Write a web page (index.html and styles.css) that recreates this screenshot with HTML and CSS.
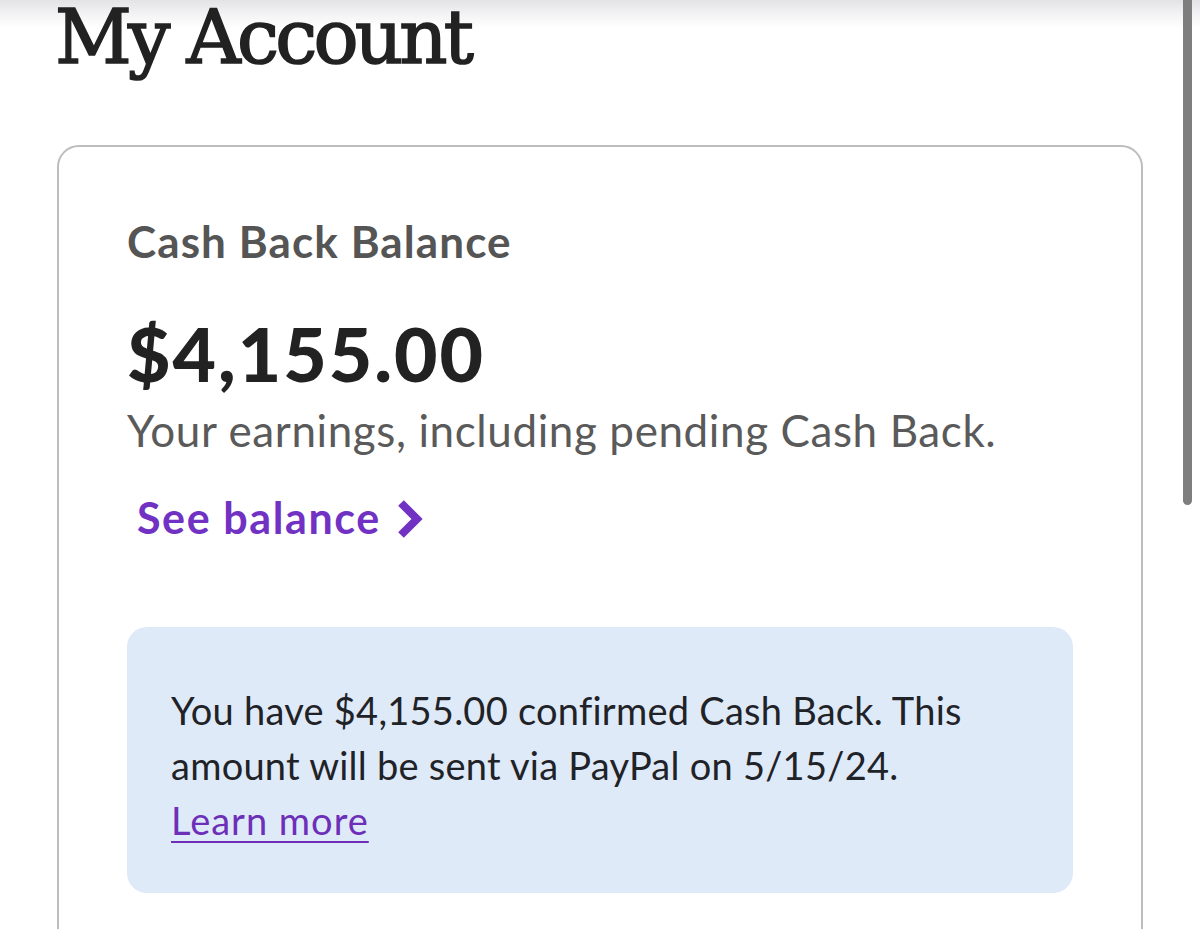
FILE: index.html
```html
<!DOCTYPE html>
<html lang="en">
<head>
<meta charset="utf-8">
<title>My Account</title>
<link rel="stylesheet" href="styles.css">
</head>
<body>
<div class="scroll-indicator"></div>
<main class="page">
  <h1 class="page-title">My Account</h1>
  <section class="card">
    <h2 class="card-title">Cash Back Balance</h2>
    <div class="amount">$4,155.00</div>
    <p class="amount-note">Your earnings, including pending Cash Back.</p>
    <a class="see-balance" href="#">See balance
      <svg class="chev" width="26" height="38" viewBox="0 0 26 38" aria-hidden="true"><path d="M4 3 L20 19 L4 35" fill="none" stroke="currentColor" stroke-width="8" stroke-linejoin="miter"/></svg>
    </a>
    <div class="notice">
      <p class="notice-text">You have $4,155.00 confirmed Cash Back. This amount will be sent via PayPal on 5/15/24.</p>
      <a class="learn-more" href="#">Learn more</a>
    </div>
  </section>
</main>
</body>
</html>
```

FILE: styles.css
```css
html, body {
  margin: 0;
  padding: 0;
  height: 100%;
  overflow: hidden;
}

body {
  background: linear-gradient(to bottom, #e3e3e6 0px, #f3f3f5 14px, #ffffff 28px) no-repeat;
  background-color: #ffffff;
  font-family: "Lato", "Liberation Sans", sans-serif;
  color: #222222;
}

.scroll-indicator {
  position: fixed;
  top: 0;
  left: 1183px;
  width: 9px;
  height: 505px;
  background: #7e7e7e;
  border-radius: 0 0 5px 5px;
}

.page {
  padding: 0 57px;
}

.page-title {
  margin: 0 0 0 -2px;
  font-family: "DejaVu Serif", "Liberation Serif", serif;
  font-weight: 400;
  font-size: 75px;
  line-height: 75px;
  letter-spacing: -3.8px;
  color: #222222;
  -webkit-text-stroke: 1.6px #222222;
}

.card {
  margin-top: 70px;
  border: 2px solid #bdbdbd;
  border-radius: 22px;
  padding: 68px 68px 120px;
  display: flex;
  flex-direction: column;
  align-items: flex-start;
}

.card-title {
  margin: 0;
  font-size: 44px;
  line-height: 52px;
  font-weight: 700;
  letter-spacing: 1.1px;
  color: #555555;
}

.amount {
  margin-top: 46px;
  font-size: 75px;
  line-height: 80px;
  font-weight: 900;
  color: #222222;
  letter-spacing: 2px;
}

.amount-note {
  margin: 11px 0 0;
  font-size: 44px;
  line-height: 52px;
  font-weight: 400;
  letter-spacing: 0.6px;
  color: #5a5a5a;
}

.see-balance {
  margin: 36px 0 0 10px;
  display: flex;
  align-items: center;
  gap: 16px;
  font-size: 43px;
  line-height: 52px;
  font-weight: 700;
  letter-spacing: 1.6px;
  color: #7132c4;
  text-decoration: none;
}

.chev {
  display: block;
  margin-top: 2px;
}

.notice {
  align-self: stretch;
  margin-top: 83px;
  background: #dfeaf8;
  border-radius: 20px;
  padding: 56px 45px 45px 44px;
}

.notice-text {
  margin: 0;
  max-width: 830px;
  font-size: 38px;
  line-height: 55px;
  letter-spacing: 0.25px;
  color: #1f2328;
}

.learn-more {
  display: inline-block;
  font-size: 38px;
  line-height: 55px;
  letter-spacing: 1px;
  color: #6d2fb8;
  text-decoration: underline;
  text-decoration-thickness: 2px;
  text-underline-offset: 6px;
}
```
